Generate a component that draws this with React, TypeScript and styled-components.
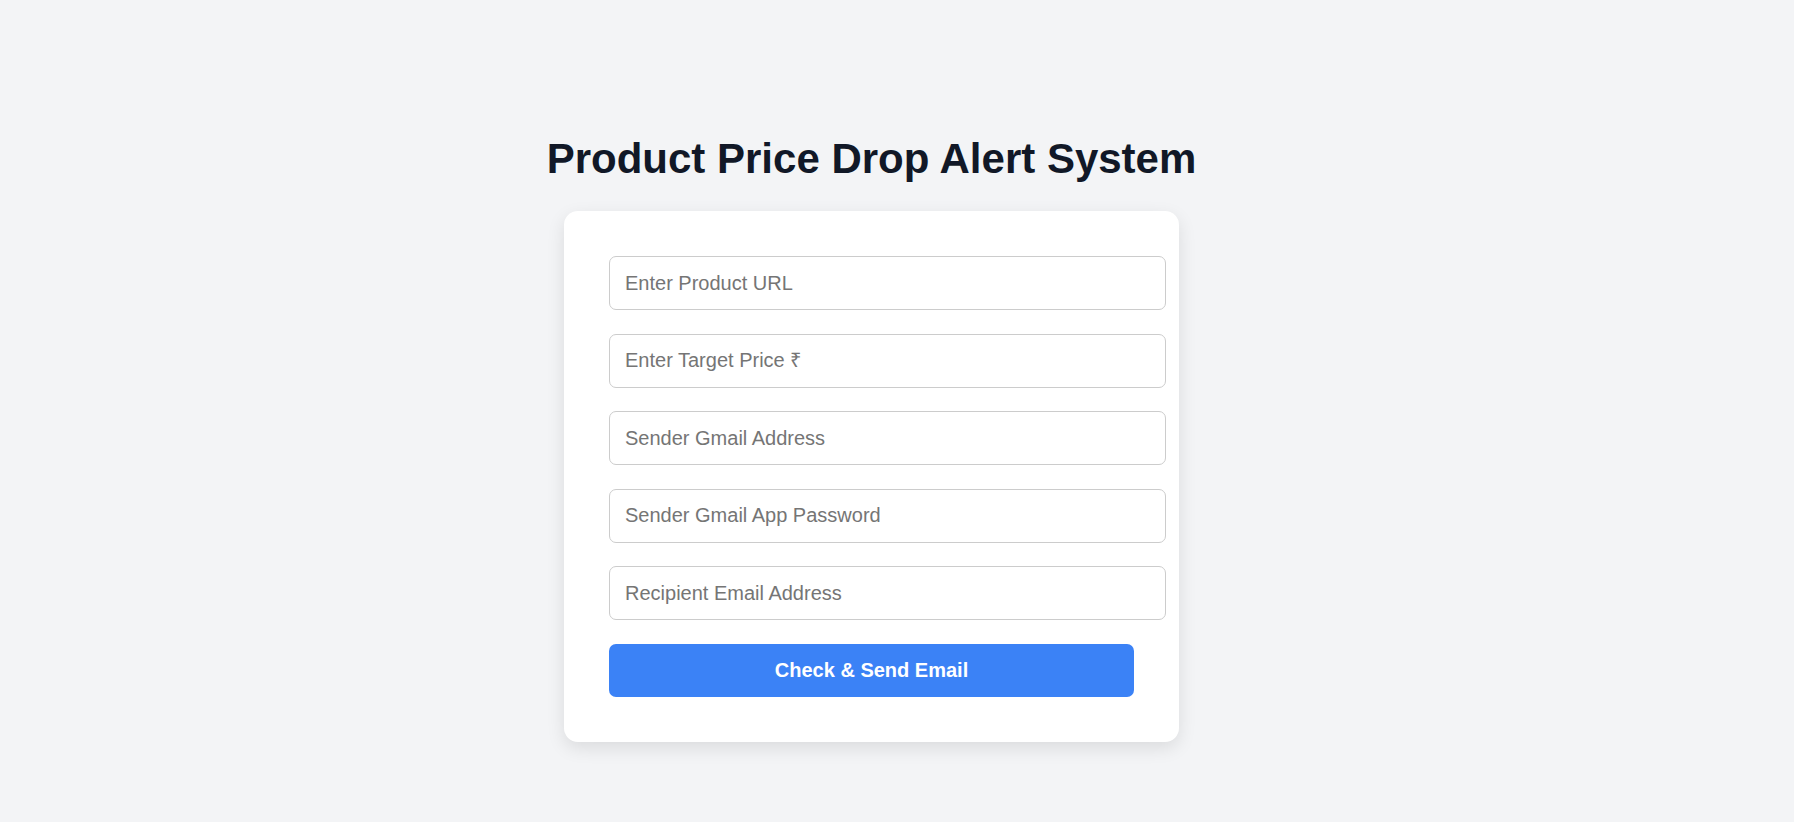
import React from 'react';
import styled, { createGlobalStyle } from 'styled-components';

const GlobalStyle = createGlobalStyle`
  html, body {
    margin: 0;
    padding: 0;
    background-color: #F3F4F6;
    font-family: "Liberation Sans", Arial, sans-serif;
  }
`;

const Page = styled.div`
  min-height: 822px;
  box-sizing: border-box;
  display: flex;
  flex-direction: column;
  align-items: center;
  padding: 135px 51px 0 0;
`;

const Title = styled.h1`
  margin: 0 0 28.5px 0;
  font-size: 42px;
  font-weight: 700;
  color: #111827;
  line-height: 47.5px;
`;

const Card = styled.form`
  box-sizing: border-box;
  width: 615px;
  padding: 45px 13px 45px 45px;
  background-color: #FFFFFF;
  border-radius: 14px;
  box-shadow: 0 6px 18px rgba(0, 0, 0, 0.1);
  display: flex;
  flex-direction: column;
  gap: 23.5px;
`;

const Input = styled.input`
  box-sizing: border-box;
  width: 557px;
  height: 54px;
  padding: 0 15px;
  border: 1px solid #CCCCCC;
  border-radius: 7px;
  font-family: "Liberation Sans", Arial, sans-serif;
  font-size: 20px;
  color: #111827;
  outline: none;

  &::placeholder {
    color: #757575;
  }
`;

const SubmitButton = styled.button`
  box-sizing: border-box;
  width: 525px;
  height: 53.5px;
  border: none;
  border-radius: 7px;
  background-color: #3B82F6;
  color: #FFFFFF;
  font-family: "Liberation Sans", Arial, sans-serif;
  font-size: 20px;
  font-weight: 700;
  cursor: pointer;
`;

const fields = [
  { placeholder: 'Enter Product URL', type: 'text' },
  { placeholder: 'Enter Target Price ₹', type: 'number' },
  { placeholder: 'Sender Gmail Address', type: 'email' },
  { placeholder: 'Sender Gmail App Password', type: 'password' },
  { placeholder: 'Recipient Email Address', type: 'email' },
];

function App() {
  return (
    <>
      <GlobalStyle />
      <Page>
        <Title>Product Price Drop Alert System</Title>
        <Card onSubmit={(e) => e.preventDefault()}>
          {fields.map((f) => (
            <Input key={f.placeholder} type={f.type} placeholder={f.placeholder} />
          ))}
          <SubmitButton type="submit">Check &amp; Send Email</SubmitButton>
        </Card>
      </Page>
    </>
  );
}

export default App;
